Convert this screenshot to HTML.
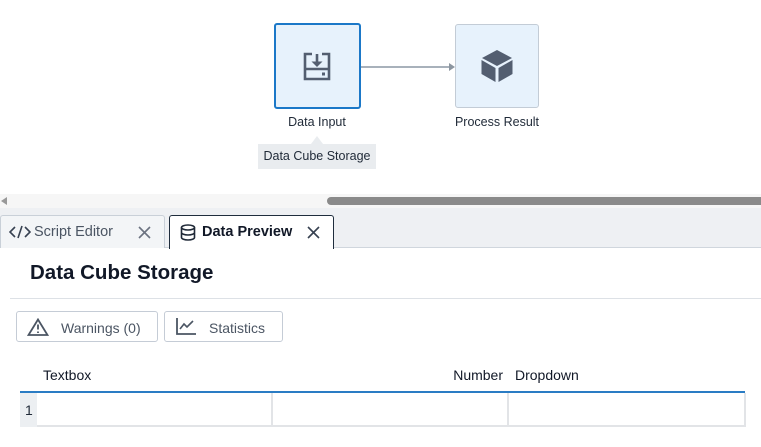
<!DOCTYPE html>
<html><head><style>
body{margin:0;width:761px;height:447px;background:#fff;font-family:"Liberation Sans",sans-serif;position:relative;overflow:hidden;color:#1f2937}
.a{position:absolute}
.lbl{font-size:12px;color:#1f2937;text-align:center}
.btn{position:absolute;top:311px;height:31px;border:1px solid #c5ccd6;border-radius:3px;background:#fff;font-size:14px;color:#4b5563;box-sizing:border-box}
.hd{font-size:14px;color:#111827;top:367px}
</style></head><body>
<div class="a" style="left:361px;top:66px;width:90px;height:2px;background:#a8b1bb"></div>
<div class="a" style="left:449px;top:63px;width:0;height:0;border-left:6px solid #8c96a0;border-top:4px solid transparent;border-bottom:4px solid transparent"></div>
<div class="a" style="left:274px;top:23px;width:83px;height:82px;border:2px solid #1b78c8;border-radius:3px;background:#e7f2fc"></div>
<svg class="a" style="left:302px;top:51px" width="30" height="32" viewBox="0 0 30 32">
<path d="M10 3H3v25h24V3h-7" fill="none" stroke="#535e70" stroke-width="2.6"/>
<path d="M3 18h24" stroke="#535e70" stroke-width="2.6"/>
<path d="M15 3v9" stroke="#535e70" stroke-width="2.6"/>
<path d="M9.5 10.5L15 16l5.5-5.5z" fill="#535e70"/>
<rect x="20" y="21.5" width="3" height="3" fill="#535e70"/>
</svg>
<div class="a lbl" style="left:257px;top:115px;width:120px;font-size:12.5px">Data Input</div>
<div class="a" style="left:455px;top:24px;width:82px;height:82px;border:1px solid #c3ccd6;border-radius:3px;background:#e7f2fc"></div>
<svg class="a" style="left:480px;top:49px" width="34" height="34" viewBox="0 0 34 34">
<path d="M17 1L32 9L17 17L2 9Z" fill="#535e70"/>
<path d="M1.5 11L15.5 19V33L1.5 25Z" fill="#535e70"/>
<path d="M32.5 11L18.5 19V33L32.5 25Z" fill="#535e70"/>
</svg>
<div class="a lbl" style="left:437px;top:115px;width:120px;font-size:12.5px">Process Result</div>
<div class="a" style="left:311px;top:136px;width:0;height:0;border-bottom:8px solid #e9ecef;border-left:6px solid transparent;border-right:6px solid transparent"></div>
<div class="a lbl" style="left:258px;top:144px;width:118px;height:25px;line-height:25px;background:#e9ecef;font-size:12.5px">Data Cube Storage</div>
<div class="a" style="left:0;top:194px;width:761px;height:14px;background:#f6f6f6"></div>
<div class="a" style="left:1px;top:197px;width:0;height:0;border-right:6px solid #999;border-top:4px solid transparent;border-bottom:4px solid transparent"></div>
<div class="a" style="left:327px;top:197px;width:440px;height:8px;background:#8a8a8a;border-radius:4px"></div>
<div class="a" style="left:0;top:208px;width:761px;height:39px;background:#eef0f3;border-bottom:1px solid #d0d6dd"></div>
<div class="a" style="left:0;top:215px;width:163px;height:32px;background:#f3f5f7;border:1px solid #c9d0d8;border-bottom:none;border-radius:3px 3px 0 0;font-size:14.5px;color:#4b5563;line-height:33px">
<svg class="a" style="left:8px;top:9px" width="22" height="14" viewBox="0 0 22 14"><path d="M6 2L1 7l5 5M16 2l5 5-5 5M13 1L9 13" fill="none" stroke="#374151" stroke-width="1.6"/></svg>
<span class="a" style="left:33px;top:0">Script Editor</span>
<svg class="a" style="left:137px;top:10px" width="13" height="13"><path d="M1 1l11 11M12 1L1 12" stroke="#6b7280" stroke-width="1.6"/></svg></div>
<div class="a" style="left:169px;top:215px;width:163px;height:33px;background:#fff;border:1px solid #1f2d3d;border-bottom:none;border-radius:3px 3px 0 0;font-size:14.5px;font-weight:bold;color:#111827;line-height:33px">
<svg class="a" style="left:10px;top:8px" width="16" height="17" viewBox="0 0 16 17"><ellipse cx="8" cy="3.5" rx="6.5" ry="2.5" fill="none" stroke="#1f2937" stroke-width="1.6"/><path d="M1.5 3.5v10c0 1.4 2.9 2.5 6.5 2.5s6.5-1.1 6.5-2.5v-10M1.5 8.5c0 1.4 2.9 2.5 6.5 2.5s6.5-1.1 6.5-2.5" fill="none" stroke="#1f2937" stroke-width="1.6"/></svg>
<span class="a" style="left:32px;top:0">Data Preview</span>
<svg class="a" style="left:137px;top:10px" width="13" height="13"><path d="M1 1l11 11M12 1L1 12" stroke="#374151" stroke-width="1.6"/></svg></div>
<div class="a" style="left:30px;top:261px;font-size:20.5px;font-weight:bold;color:#111827">Data Cube Storage</div>
<div class="a" style="left:10px;top:298px;width:751px;height:1px;background:#dde1e6"></div>
<div class="btn" style="left:16px;width:142px">
<svg class="a" style="left:10px;top:6px" width="22" height="18" viewBox="0 0 22 18"><path d="M11 1.5L1.5 17h19z" fill="none" stroke="#4b5563" stroke-width="1.8"/><path d="M11 6.5v5M11 13.5v1.5" stroke="#4b5563" stroke-width="1.8"/></svg>
<span class="a" style="left:44px;top:8px">Warnings (0)</span></div>
<div class="btn" style="left:164px;width:119px">
<svg class="a" style="left:11px;top:6px" width="20" height="17" viewBox="0 0 20 17"><path d="M1 0v16h19" fill="none" stroke="#4b5563" stroke-width="1.8"/><path d="M4 11l4-5 3 3 6-6" fill="none" stroke="#4b5563" stroke-width="1.6"/></svg>
<span class="a" style="left:44px;top:8px">Statistics</span></div>
<div class="a hd" style="left:43px">Textbox</div>
<div class="a hd" style="left:403px;width:100px;text-align:right">Number</div>
<div class="a hd" style="left:515px">Dropdown</div>
<div class="a" style="left:20px;top:391px;width:725px;height:2px;background:#2a7cc4"></div>
<div class="a" style="left:20px;top:393px;width:17px;height:34px;background:#eceff2;font-size:14px;line-height:34px;padding-left:5px;box-sizing:border-box">1</div>
<div class="a" style="left:37px;top:393px;width:236px;height:34px;border:2px solid #e2e4e7;border-left:none;border-top:none;box-sizing:border-box"></div>
<div class="a" style="left:273px;top:393px;width:236px;height:34px;border:2px solid #e2e4e7;border-left:none;border-top:none;box-sizing:border-box"></div>
<div class="a" style="left:509px;top:393px;width:237px;height:34px;border:2px solid #e2e4e7;border-left:none;border-top:none;box-sizing:border-box"></div>
</body></html>
